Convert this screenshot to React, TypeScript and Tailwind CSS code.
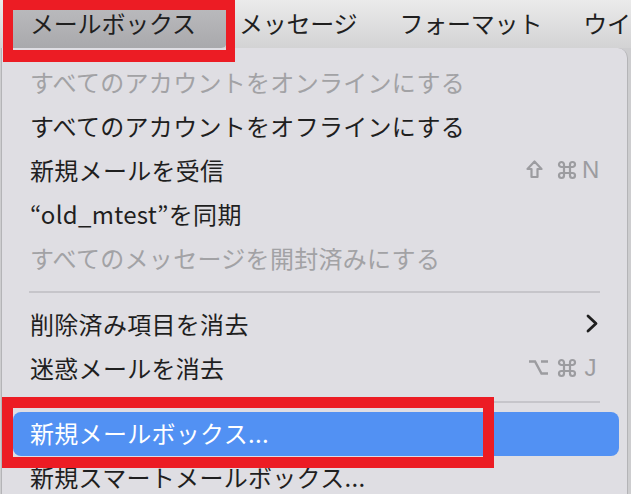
import React from "react";

type Item =
  | { kind: "item"; label: string; disabled?: boolean; shortcut?: "shiftN" | "optJ"; submenu?: boolean; active?: boolean }
  | { kind: "sep"; h: number };

const items: Item[] = [
  { kind: "item", label: "すべてのアカウントをオンラインにする", disabled: true },
  { kind: "item", label: "すべてのアカウントをオフラインにする" },
  { kind: "item", label: "新規メールを受信", shortcut: "shiftN" },
  { kind: "item", label: "“old_mtest”を同期" },
  { kind: "item", label: "すべてのメッセージを開封済みにする", disabled: true },
  { kind: "sep", h: 22 },
  { kind: "item", label: "削除済み項目を消去", submenu: true },
  { kind: "item", label: "迷惑メールを消去", shortcut: "optJ" },
  { kind: "sep", h: 21 },
  { kind: "item", label: "新規メールボックス...", active: true },
  { kind: "item", label: "新規スマートメールボックス..." },
];

function Shortcut({ type }: { type: "shiftN" | "optJ" }) {
  return (
    <div className="flex items-center leading-none text-[#9c9ca0]">
      {type === "shiftN" ? (
        <svg width="17" height="19" viewBox="0 0 17 19" className="mr-[14px]">
          <path d="M8.5 1.5 L15.5 9 H11.5 V17 H5.5 V9 H1.5 Z" fill="none" stroke="#9c9ca0" strokeWidth="2.2" strokeLinejoin="round" />
        </svg>
      ) : (
        <svg width="21" height="17" viewBox="0 0 21 17" className="mr-[8px]">
          <path d="M1 2.5 H7 L13.5 14.5 H20 M13 2.5 H20" fill="none" stroke="#9c9ca0" strokeWidth="2.4" />
        </svg>
      )}
      <svg width="20" height="20" viewBox="0 0 20 20" className="mr-[5px]">
        <path
          d="M7 7 V4.5 A2.5 2.5 0 1 0 4.5 7 H15.5 A2.5 2.5 0 1 0 13 4.5 V15.5 A2.5 2.5 0 1 0 15.5 13 H4.5 A2.5 2.5 0 1 0 7 15.5 Z"
          fill="none"
          stroke="#9c9ca0"
          strokeWidth="2.2"
        />
      </svg>
      <span className="font-['Liberation_Sans',sans-serif] text-[24px] w-[17px] text-center">{type === "shiftN" ? "N" : "J"}</span>
    </div>
  );
}

export default function App() {
  return (
    <div className="relative w-[631px] h-[494px] overflow-hidden bg-[#cdcdcf] font-['Noto_Sans_CJK_JP',sans-serif]">
      {/* menu bar */}
      <div className="h-[48px] w-[631px] overflow-hidden flex items-stretch bg-gradient-to-b from-[#ebebeb] to-[#d3d3d4] text-[24px] tracking-[-0.2px] text-[#1f1f1f] leading-none whitespace-nowrap">
        <div className="shrink-0 ml-[6px] pl-[24px] pr-[31px] flex items-center rounded-br-[6px] bg-gradient-to-b from-[#bdbdc0] to-[#a9a9ac] pb-[3px]">
          メールボックス
        </div>
        <div className="shrink-0 pl-[12px] pr-[42px] flex items-center pb-[3px]">メッセージ</div>
        <div className="shrink-0 pr-[41px] flex items-center pb-[3px]">フォーマット</div>
        <div className="shrink-0 flex items-center pb-[3px]">ウイ</div>
      </div>

      {/* dropdown panel */}
      <div className="ml-[1px] w-[627px] h-[446px] bg-[#dfdee3] rounded-tr-[10px] border-l border-r border-[#b4b4b7] pt-[13px] pl-[11px] pr-[8px]">
        {items.map((it, i) =>
          it.kind === "sep" ? (
            <div key={i} className="flex items-center pl-[16px] pr-[19px]" style={{ height: it.h }}>
              <div className="h-[2px] w-full bg-[#c6c5ca]" />
            </div>
          ) : (
            <div
              key={i}
              className={
                "h-[44px] flex items-center justify-between pl-[17px] pr-[20px] pb-[3px] rounded-[8px] text-[24px] leading-none whitespace-nowrap " +
                (it.active ? "bg-[#5291f3] text-white" : it.disabled ? "text-[#a2a2a5]" : "text-[#1f1f1f]")
              }
            >
              <span className="tracking-[0.3px]">{it.label}</span>
              {it.shortcut && <Shortcut type={it.shortcut} />}
              {it.submenu && (
                <svg width="12" height="19" viewBox="0 0 12 19" className="mr-[1px]">
                  <path d="M2 2 L10 9.5 L2 17" fill="none" stroke="#1f1f1f" strokeWidth="2.8" strokeLinecap="round" strokeLinejoin="round" />
                </svg>
              )}
            </div>
          )
        )}
      </div>

      {/* red annotation boxes */}
      <div className="absolute left-[3px] top-0 w-[232px] h-[62px] border-[#ec1c24] border-t-[10px] border-l-[10px] border-r-[9px] border-b-[12px]" />
      <div className="absolute left-[2px] top-[397px] w-[492px] h-[71px] border-[#ec1c24] border-[11px]" />
    </div>
  );
}
